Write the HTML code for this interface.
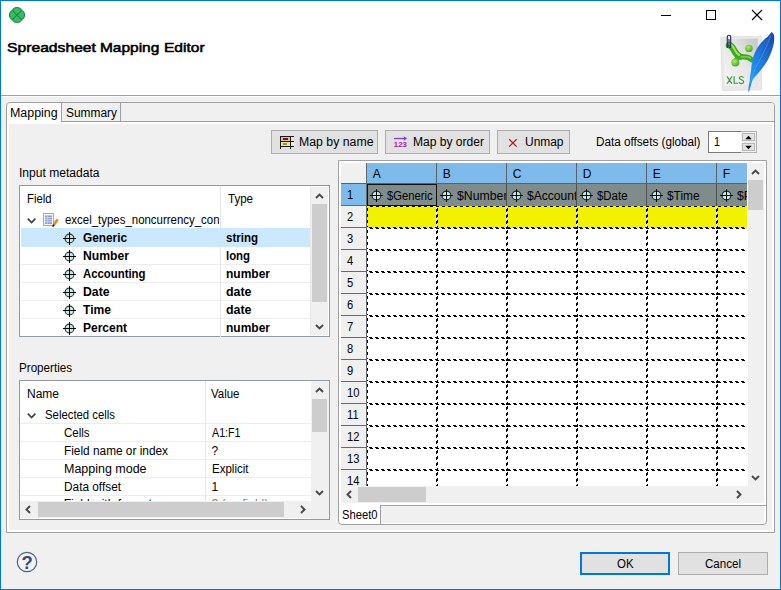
<!DOCTYPE html>
<html><head><meta charset="utf-8"><title>Spreadsheet Mapping Editor</title>
<style>
html,body{margin:0;padding:0}
body{width:781px;height:590px;overflow:hidden;background:#f0f0f0;position:relative;font-family:"Liberation Sans",sans-serif;font-size:12px}
.a{position:absolute;display:block}
.t{position:absolute;white-space:nowrap;display:block}
</style></head><body>
<div class="a" style="left:0px;top:0px;width:781px;height:590px;background:#f0f0f0;"></div>
<div class="a" style="left:1px;top:1px;width:779px;height:94px;background:#fff;"></div>
<div class="a" style="left:1px;top:95px;width:779px;height:1px;background:#a0a0a0;"></div>
<div class="a" style="left:1px;top:96px;width:779px;height:1px;background:#fbfbfb;"></div>
<div class="a" style="left:0px;top:0px;width:781px;height:1px;background:#0078d7;"></div>
<div class="a" style="left:0px;top:0px;width:1px;height:590px;background:#0078d7;"></div>
<div class="a" style="left:780px;top:0px;width:1px;height:590px;background:#0078d7;"></div>
<div class="a" style="left:0px;top:589px;width:781px;height:1px;background:#0078d7;"></div>
<svg class="a" style="left:8px;top:6px;" width="18" height="18" viewBox="0 0 18 18"><g fill="#3cb868" stroke="#17903e" stroke-width="1.4"><ellipse cx="9" cy="5.5" rx="4.6" ry="3.9"/><ellipse cx="9" cy="12.5" rx="4.6" ry="3.9"/><ellipse cx="5.5" cy="9" rx="3.9" ry="4.6"/><ellipse cx="12.5" cy="9" rx="3.9" ry="4.6"/></g><g fill="#3cb868"><ellipse cx="9" cy="5.5" rx="4.0" ry="3.3"/><ellipse cx="9" cy="12.5" rx="4.0" ry="3.3"/><ellipse cx="5.5" cy="9" rx="3.3" ry="4.0"/><ellipse cx="12.5" cy="9" rx="3.3" ry="4.0"/><rect x="4.5" y="4.5" width="9" height="9"/></g><path d="M4.2 4.2L13.8 13.8M13.8 4.2L4.200 13.800" stroke="#17903e" stroke-width="1.200" fill="none"/></svg>
<div class="a" style="left:661px;top:15px;width:10px;height:1px;background:#000;"></div>
<div class="a" style="left:706px;top:10px;width:10px;height:10px;border:1px solid #000;box-sizing:border-box;"></div>
<svg class="a" style="left:751px;top:9px;" width="12" height="12" viewBox="0 0 12 12"><path d="M1 1L11 11M11 1L1 11" stroke="#000" stroke-width="1.1" fill="none"/></svg>
<span class="t" style="left:7.4px;top:40.00px;font-size:13.4px;line-height:16px;color:#000;transform:scaleX(1.1713);transform-origin:0 0;-webkit-text-stroke:0.55px #000;">Spreadsheet</span>
<span class="t" style="left:100.4px;top:40.00px;font-size:13.4px;line-height:16px;color:#000;transform:scaleX(1.1538);transform-origin:0 0;-webkit-text-stroke:0.55px #000;">Mapping</span>
<span class="t" style="left:164.4px;top:40.00px;font-size:13.4px;line-height:16px;color:#000;transform:scaleX(1.1599);transform-origin:0 0;-webkit-text-stroke:0.55px #000;">Editor</span>
<svg class="a" style="left:711px;top:24px;" width="70" height="76" viewBox="0 0 70 76">
<defs>
<linearGradient id="pg" x1="0" y1="1" x2="1" y2="0"><stop offset="0" stop-color="#f6f6f6"/><stop offset="0.55" stop-color="#e6e6e6"/><stop offset="1" stop-color="#c4c4c4"/></linearGradient>
<linearGradient id="fg" x1="1" y1="0" x2="0" y2="1"><stop offset="0" stop-color="#1c46a4"/><stop offset="0.45" stop-color="#1e72d8"/><stop offset="0.8" stop-color="#1f9af4"/><stop offset="1" stop-color="#1a86f0"/></linearGradient>
<radialGradient id="gb" cx="0.4" cy="0.35" r="0.7"><stop offset="0" stop-color="#b4ee50"/><stop offset="1" stop-color="#3aa428"/></radialGradient>
</defs>
<path d="M9.7 13L50.3 12.2L50.6 65.7L11.6 66.5z" fill="#e9e9e9" stroke="#dcdcdc" stroke-width="0.8"/>
<path d="M12.2 15.5L46.6 14.5L46.8 60.6L13.6 61.9z" fill="url(#pg)"/>
<path d="M18 21C23.500 22.500 22.500 30 29 32.500" stroke="#3fa824" stroke-width="6.600" fill="none" stroke-linecap="round"/>
<path d="M27 31.500C31.500 34.500 36.500 30.500 40.600 35.800" stroke="#3fa824" stroke-width="5.200" fill="none" stroke-linecap="round"/>
<path d="M29 32.500C26 33 25 36 24.500 38.500" stroke="#3fa824" stroke-width="4.800" fill="none" stroke-linecap="round"/>
<path d="M17.500 19.500C23.500 20.500 23 28.500 28 31" stroke="#a6e654" stroke-width="2" fill="none" stroke-linecap="round"/>
<path d="M30 32.800C34 33.600 37 31.500 39.500 34" stroke="#8cd840" stroke-width="1.200" fill="none" stroke-linecap="round"/>
<circle cx="38" cy="24.4" r="3.7" fill="url(#gb)"/>
<circle cx="24.400" cy="38.600" r="4" fill="url(#gb)"/>
<path d="M16 52.400L21 59.700M21 52.400L16 59.700M23.100 52.300V59.200H27M32.500 53.900C31.800 52.200 28.500 51.900 28.400 54C28.300 56.100 32.900 55.600 32.700 58C32.500 60.200 28.700 60.100 27.900 58.100" stroke="#379a37" stroke-width="1.150" fill="none"/>
<path d="M16.300 24v-11c0-2.400 3.400-2.400 3.400 0v9.500c0 1.400-1.700 1.400-1.700 0v-7.500" fill="none" stroke="#1e2a68" stroke-width="1.100"/>
<path d="M60.6 8c2.200 1.600 3 4 2.600 6.200c.2 3-.4 6-1.300 9c-1 3.600-2.300 7-3.900 10.300c-1.700 3.600-4 7-6.400 10.300c-2 2.800-4.400 5.400-6.500 7.800c-1.500 1.800-3 3.400-3.800 5.100l-3.300 11l-.8-.2c.2-3.400.6-7 1.500-10.400c.2-3.500.6-7 1.300-10.300c.4-3.500.6-7 1.300-10.300c.8-3.700 2-7.200 3.800-10.300c1.700-3.300 3.800-6.400 6.500-9c1.500-1.800 3.200-3.400 5.100-4.500c1.200-1.500 2.500-2.700 3.900-4.700z" fill="url(#fg)"/>
<path d="M59.500 12c-3 9-8 19-13.500 29c-3 6-5.500 12-7 19" stroke="#6cc0ff" stroke-width="0.700" fill="none" opacity="0.550"/>
<path d="M56 16c-4 5-7 11-9 17M60 22c-3 6-7 12-11 17M57 32c-3 4-6 8-9 11" stroke="#5ab0ff" stroke-width="0.500" fill="none" opacity="0.350"/>
</svg>
<div class="a" style="left:6px;top:102px;width:769px;height:431px;background:#fff;border:1px solid #a0a0a0;box-sizing:border-box;border-radius:4px 4px 0 0;"></div>
<div class="a" style="left:9px;top:124px;width:763px;height:406px;background:#f0f0f0;"></div>
<div class="a" style="left:62px;top:103px;width:712px;height:18px;background:#f0f0f0;border-radius:0 3px 0 0;"></div>
<div class="a" style="left:62px;top:121px;width:712px;height:1px;background:#a0a0a0;"></div>
<div class="a" style="left:61px;top:103px;width:1px;height:19px;background:#a0a0a0;"></div>
<div class="a" style="left:120px;top:103px;width:1px;height:18px;background:#a0a0a0;"></div>
<span class="t" style="left:9.7px;top:105.00px;font-size:12px;line-height:16px;color:#000;transform:scaleX(1.0363);transform-origin:0 0;">Mapping</span>
<span class="t" style="left:66.0px;top:105.00px;font-size:12px;line-height:16px;color:#000;transform:scaleX(0.9934);transform-origin:0 0;">Summary</span>
<div class="a" style="left:271px;top:130px;width:107px;height:24px;background:#e1e1e1;border:1px solid #adadad;box-sizing:border-box;"></div>
<div class="a" style="left:385px;top:130px;width:105px;height:24px;background:#e1e1e1;border:1px solid #adadad;box-sizing:border-box;"></div>
<div class="a" style="left:497px;top:130px;width:73px;height:24px;background:#e1e1e1;border:1px solid #adadad;box-sizing:border-box;"></div>
<svg class="a" style="left:280px;top:136px;shape-rendering:crispEdges;" width="14" height="13" viewBox="0 0 14 13"><rect x="1" y="1" width="9" height="4" fill="#f0b4a4"/><rect x="11" y="1" width="3" height="4" fill="#f8dcd4"/>
<rect x="1" y="6" width="9" height="4" fill="#e6e88e"/><rect x="11" y="6" width="3" height="4" fill="#f2f2c4"/>
<rect x="3" y="2" width="5" height="2" fill="#2a1414" opacity="0.85"/><rect x="3" y="7" width="4" height="2" fill="#5a5a20" opacity="0.6"/>
<path d="M0.5 0V13M10.5 0V13M0 0.5H14M0 5.5H14M0 10.5H14" stroke="#1a1a1a" stroke-width="1" fill="none"/></svg>
<span class="t" style="left:299.2px;top:134.00px;font-size:12px;line-height:16px;color:#000;transform:scaleX(1.0248);transform-origin:0 0;">Map by name</span>
<svg class="a" style="left:393px;top:134px;" width="16" height="16" viewBox="0 0 16 16"><path d="M1 4.500h12.500" stroke="#7a3ad8" stroke-width="1.200" fill="none"/><path d="M10.800 2.200l3 2.300l-3 2.300z" fill="#7a3ad8"/>
<text x="0.8" y="13.4" font-family="Liberation Sans, sans-serif" font-size="7.6" font-weight="bold" fill="#a41ea4" textLength="13" lengthAdjust="spacingAndGlyphs">123</text></svg>
<span class="t" style="left:413.2px;top:134.00px;font-size:12px;line-height:16px;color:#000;transform:scaleX(1.0043);transform-origin:0 0;">Map by order</span>
<svg class="a" style="left:508px;top:138px;" width="10" height="10" viewBox="0 0 10 10"><path d="M1.2 1.2L8.6 8.6M8.600 1.200L1.200 8.600" stroke="#a82828" stroke-width="1.300" fill="none"/></svg>
<span class="t" style="left:525.2px;top:134.00px;font-size:12px;line-height:16px;color:#000;transform:scaleX(0.9953);transform-origin:0 0;">Unmap</span>
<span class="t" style="left:596.4px;top:134.00px;font-size:12px;line-height:16px;color:#000;transform:scaleX(0.9752);transform-origin:0 0;">Data offsets (global)</span>
<div class="a" style="left:708px;top:131px;width:49px;height:22px;background:#f0f0f0;border:1px solid #b2b2b2;box-sizing:border-box;"></div>
<div class="a" style="left:708px;top:131px;width:33px;height:22px;background:#fff;border:1px solid #7a7a7a;box-sizing:border-box;border-right:none;"></div>
<div class="a" style="left:742px;top:133px;width:13px;height:8px;background:#e3e3e3;border:1px solid #b8b8b8;box-sizing:border-box;"></div>
<div class="a" style="left:742px;top:143px;width:13px;height:8px;background:#e3e3e3;border:1px solid #b8b8b8;box-sizing:border-box;"></div>
<svg class="a" style="left:745px;top:135px;" width="7" height="5" viewBox="0 0 7 5"><path d="M0.3 4.2L3.5 0.8L6.7 4.2z" fill="#000"/></svg>
<svg class="a" style="left:745px;top:145px;" width="7" height="5" viewBox="0 0 7 5"><path d="M0.3 0.8L3.500 4.200L6.700 0.800z" fill="#000"/></svg>
<span class="t" style="left:714.2px;top:134.00px;font-size:12px;line-height:16px;color:#000;transform:scaleX(0.8991);transform-origin:0 0;">1</span>
<span class="t" style="left:18.7px;top:165.00px;font-size:12px;line-height:16px;color:#000;transform:scaleX(1.0056);transform-origin:0 0;">Input metadata</span>
<div class="a" style="left:19px;top:185px;width:311px;height:152px;background:#fff;border:1px solid #9498a2;box-sizing:border-box;"></div>
<div class="a" style="left:220px;top:186px;width:1px;height:150px;background:#e5e5e5;"></div>
<div class="a" style="left:310px;top:186px;width:1px;height:149px;background:#e8e8e8;"></div>
<span class="t" style="left:26.7px;top:191.00px;font-size:12px;line-height:16px;color:#000;transform:scaleX(0.9420);transform-origin:0 0;">Field</span>
<span class="t" style="left:227.5px;top:191.00px;font-size:12px;line-height:16px;color:#000;transform:scaleX(0.9610);transform-origin:0 0;">Type</span>
<div class="a" style="left:21px;top:228px;width:289px;height:19px;background:#cce8ff;"></div>
<div class="a" style="left:21px;top:264px;width:289px;height:1px;background:#ededed;"></div>
<div class="a" style="left:21px;top:282px;width:289px;height:1px;background:#ededed;"></div>
<div class="a" style="left:21px;top:300px;width:289px;height:1px;background:#ededed;"></div>
<div class="a" style="left:21px;top:318px;width:289px;height:1px;background:#ededed;"></div>
<div class="a" style="left:220px;top:229px;width:1px;height:18px;background:#cce8ff;"></div>
<div class="a" style="left:220px;top:247px;width:1px;height:18px;background:#e5e5e5;"></div>
<div class="a" style="left:220px;top:265px;width:1px;height:18px;background:#e5e5e5;"></div>
<div class="a" style="left:220px;top:283px;width:1px;height:18px;background:#e5e5e5;"></div>
<div class="a" style="left:220px;top:301px;width:1px;height:18px;background:#e5e5e5;"></div>
<div class="a" style="left:220px;top:319px;width:1px;height:18px;background:#e5e5e5;"></div>
<svg class="a" style="left:27px;top:217px;" width="10" height="8" viewBox="0 0 10 8"><path d="M0.8 1.6L4.6 5.6L8.4 1.6" stroke="#404040" stroke-width="1.6" fill="none"/></svg>
<svg class="a" style="left:42px;top:212px;" width="18" height="16" viewBox="0 0 18 16"><rect x="1.5" y="1.5" width="10" height="12" fill="#f6f5ee" stroke="#b9ab7c"/>
<rect x="3" y="3.5" width="7" height="8.5" fill="#8d9dd6"/>
<path d="M3 5.7h7M3 7.8h7M3 9.900h7" stroke="#e4e9fb" stroke-width="0.800"/><path d="M5.300 3.500v8.500" stroke="#c9d2f4" stroke-width="0.800"/>
<path d="M15.600 7.200L11.600 13.200" stroke="#e08a2e" stroke-width="2.600"/><path d="M11.900 12.700L10.700 14.600" stroke="#1a1a1a" stroke-width="1.600"/></svg>
<div class="a" style="left:64.6px;top:212.00px;width:154.4px;height:16px;overflow:hidden"><span class="t" style="left:0;top:0;font-size:12px;line-height:16px;color:#000;transform:scaleX(0.9532);transform-origin:0 0;">excel_types_noncurrency_con</span></div>
<svg class="a" style="left:63px;top:232px;" width="13" height="13" viewBox="0 0 13 13"><circle cx="6.5" cy="6.5" r="4.4" fill="#c4ece6" stroke="#2c3636" stroke-width="1.1"/><path d="M6.5 0V13M0 6.5H13" stroke="#000" stroke-width="1" fill="none"/></svg>
<span class="t" style="left:82.7px;top:230.00px;font-size:12px;line-height:16px;color:#000;font-weight:bold;transform:scaleX(0.9846);transform-origin:0 0;">Generic</span>
<span class="t" style="left:226.4px;top:230.00px;font-size:12px;line-height:16px;color:#000;font-weight:bold;transform:scaleX(0.9600);transform-origin:0 0;">string</span>
<svg class="a" style="left:63px;top:250px;" width="13" height="13" viewBox="0 0 13 13"><circle cx="6.5" cy="6.5" r="4.4" fill="#c4ece6" stroke="#2c3636" stroke-width="1.1"/><path d="M6.5 0V13M0 6.5H13" stroke="#000" stroke-width="1" fill="none"/></svg>
<span class="t" style="left:82.7px;top:248.00px;font-size:12px;line-height:16px;color:#000;font-weight:bold;transform:scaleX(1.0146);transform-origin:0 0;">Number</span>
<span class="t" style="left:226.4px;top:248.00px;font-size:12px;line-height:16px;color:#000;font-weight:bold;transform:scaleX(0.9478);transform-origin:0 0;">long</span>
<svg class="a" style="left:63px;top:268px;" width="13" height="13" viewBox="0 0 13 13"><circle cx="6.5" cy="6.5" r="4.4" fill="#c4ece6" stroke="#2c3636" stroke-width="1.1"/><path d="M6.5 0V13M0 6.5H13" stroke="#000" stroke-width="1" fill="none"/></svg>
<span class="t" style="left:82.7px;top:266.00px;font-size:12px;line-height:16px;color:#000;font-weight:bold;transform:scaleX(0.9471);transform-origin:0 0;">Accounting</span>
<span class="t" style="left:226.4px;top:266.00px;font-size:12px;line-height:16px;color:#000;font-weight:bold;transform:scaleX(0.9999);transform-origin:0 0;">number</span>
<svg class="a" style="left:63px;top:286px;" width="13" height="13" viewBox="0 0 13 13"><circle cx="6.5" cy="6.5" r="4.4" fill="#c4ece6" stroke="#2c3636" stroke-width="1.1"/><path d="M6.5 0V13M0 6.5H13" stroke="#000" stroke-width="1" fill="none"/></svg>
<span class="t" style="left:82.7px;top:284.00px;font-size:12px;line-height:16px;color:#000;font-weight:bold;transform:scaleX(1.0189);transform-origin:0 0;">Date</span>
<span class="t" style="left:226.4px;top:284.00px;font-size:12px;line-height:16px;color:#000;font-weight:bold;transform:scaleX(1.0336);transform-origin:0 0;">date</span>
<svg class="a" style="left:63px;top:304px;" width="13" height="13" viewBox="0 0 13 13"><circle cx="6.5" cy="6.5" r="4.4" fill="#c4ece6" stroke="#2c3636" stroke-width="1.1"/><path d="M6.5 0V13M0 6.5H13" stroke="#000" stroke-width="1" fill="none"/></svg>
<span class="t" style="left:82.7px;top:302.00px;font-size:12px;line-height:16px;color:#000;font-weight:bold;transform:scaleX(1.0076);transform-origin:0 0;">Time</span>
<span class="t" style="left:226.4px;top:302.00px;font-size:12px;line-height:16px;color:#000;font-weight:bold;transform:scaleX(1.0336);transform-origin:0 0;">date</span>
<svg class="a" style="left:63px;top:322px;" width="13" height="13" viewBox="0 0 13 13"><circle cx="6.5" cy="6.5" r="4.4" fill="#c4ece6" stroke="#2c3636" stroke-width="1.1"/><path d="M6.5 0V13M0 6.5H13" stroke="#000" stroke-width="1" fill="none"/></svg>
<span class="t" style="left:82.7px;top:320.00px;font-size:12px;line-height:16px;color:#000;font-weight:bold;transform:scaleX(0.9996);transform-origin:0 0;">Percent</span>
<span class="t" style="left:226.4px;top:320.00px;font-size:12px;line-height:16px;color:#000;font-weight:bold;transform:scaleX(0.9999);transform-origin:0 0;">number</span>
<div class="a" style="left:311px;top:187px;width:17px;height:148px;background:#f0f0f0;"></div>
<div class="a" style="left:312px;top:204px;width:15px;height:98px;background:#cdcdcd;"></div>
<svg class="a" style="left:315px;top:193px;" width="9" height="6" viewBox="0 0 9 6"><path d="M1 5L4.5 1.5L8 5" stroke="#484848" stroke-width="1.9" fill="none"/></svg>
<svg class="a" style="left:315px;top:324px;" width="9" height="6" viewBox="0 0 9 6"><path d="M1 1L4.5 4.5L8 1" stroke="#484848" stroke-width="1.9" fill="none"/></svg>
<span class="t" style="left:18.7px;top:360.00px;font-size:12px;line-height:16px;color:#000;transform:scaleX(0.9691);transform-origin:0 0;">Properties</span>
<div class="a" style="left:19px;top:380px;width:311px;height:140px;background:#fff;border:1px solid #9498a2;box-sizing:border-box;"></div>
<div class="a" style="left:205px;top:381px;width:1px;height:120px;background:#e5e5e5;"></div>
<span class="t" style="left:26.7px;top:386.00px;font-size:12px;line-height:16px;color:#000;transform:scaleX(0.9997);transform-origin:0 0;">Name</span>
<span class="t" style="left:211.2px;top:386.00px;font-size:12px;line-height:16px;color:#000;transform:scaleX(0.9564);transform-origin:0 0;">Value</span>
<div class="a" style="left:20px;top:423px;width:291px;height:1px;background:#ededed;"></div>
<div class="a" style="left:20px;top:441px;width:291px;height:1px;background:#ededed;"></div>
<div class="a" style="left:20px;top:459px;width:291px;height:1px;background:#ededed;"></div>
<div class="a" style="left:20px;top:477px;width:291px;height:1px;background:#ededed;"></div>
<div class="a" style="left:20px;top:495px;width:291px;height:1px;background:#ededed;"></div>
<svg class="a" style="left:27px;top:412px;" width="10" height="8" viewBox="0 0 10 8"><path d="M0.8 1.6L4.6 5.6L8.4 1.6" stroke="#404040" stroke-width="1.6" fill="none"/></svg>
<span class="t" style="left:44.7px;top:407.00px;font-size:12px;line-height:16px;color:#000;transform:scaleX(0.9455);transform-origin:0 0;">Selected cells</span>
<span class="t" style="left:63.7px;top:425.00px;font-size:12px;line-height:16px;color:#000;transform:scaleX(0.9561);transform-origin:0 0;">Cells</span>
<span class="t" style="left:211.6px;top:425.00px;font-size:12px;line-height:16px;color:#000;transform:scaleX(0.8902);transform-origin:0 0;">A1:F1</span>
<span class="t" style="left:63.7px;top:443.00px;font-size:12px;line-height:16px;color:#000;transform:scaleX(0.9869);transform-origin:0 0;">Field name or index</span>
<span class="t" style="left:211.6px;top:443.00px;font-size:12px;line-height:16px;color:#000;">?</span>
<span class="t" style="left:63.7px;top:461.00px;font-size:12px;line-height:16px;color:#000;transform:scaleX(1.0394);transform-origin:0 0;">Mapping mode</span>
<span class="t" style="left:211.6px;top:461.00px;font-size:12px;line-height:16px;color:#000;transform:scaleX(0.9603);transform-origin:0 0;">Explicit</span>
<span class="t" style="left:63.7px;top:479.00px;font-size:12px;line-height:16px;color:#000;transform:scaleX(0.9860);transform-origin:0 0;">Data offset</span>
<span class="t" style="left:211.6px;top:479.00px;font-size:12px;line-height:16px;color:#000;">1</span>
<div class="a" style="left:20px;top:496px;width:291px;height:5px;overflow:hidden">
<span class="t" style="left:43.7px;top:0px;font-size:12px;line-height:16px">Field with format</span>
<span class="t" style="left:191.600px;top:0px;font-size:12px;line-height:16px;color:#808080">? (no field)</span>
</div>
<div class="a" style="left:311px;top:381px;width:17px;height:120px;background:#f0f0f0;"></div>
<div class="a" style="left:312px;top:399px;width:15px;height:33px;background:#cdcdcd;"></div>
<svg class="a" style="left:315px;top:387px;" width="9" height="6" viewBox="0 0 9 6"><path d="M1 5L4.5 1.5L8 5" stroke="#484848" stroke-width="1.9" fill="none"/></svg>
<svg class="a" style="left:315px;top:490px;" width="9" height="6" viewBox="0 0 9 6"><path d="M1 1L4.5 4.5L8 1" stroke="#484848" stroke-width="1.9" fill="none"/></svg>
<div class="a" style="left:328px;top:381px;width:1px;height:138px;background:#f0f0f0;"></div>
<div class="a" style="left:20px;top:501px;width:291px;height:17px;background:#f0f0f0;"></div>
<div class="a" style="left:38px;top:502px;width:246px;height:15px;background:#cdcdcd;"></div>
<svg class="a" style="left:25px;top:505px;" width="6" height="9" viewBox="0 0 6 9"><path d="M5 1L1.5 4.5L5 8" stroke="#484848" stroke-width="1.9" fill="none"/></svg>
<svg class="a" style="left:300px;top:505px;" width="6" height="9" viewBox="0 0 6 9"><path d="M1 1L4.5 4.5L1 8" stroke="#484848" stroke-width="1.9" fill="none"/></svg>
<div class="a" style="left:311px;top:501px;width:18px;height:18px;background:#f0f0f0;"></div>
<div class="a" style="left:338px;top:160px;width:429px;height:365px;background:#fff;border:1px solid #a0a0a0;box-sizing:border-box;border-radius:0 0 4px 4px;"></div>
<div class="a" style="left:341px;top:163px;width:406px;height:323px;background:#fff;"></div>
<div class="a" style="left:341px;top:163px;width:25px;height:20px;background:#f0f0f0;"></div>
<div class="a" style="left:367px;top:163px;width:380px;height:20px;background:#7ebbea;"></div>
<div class="a" style="left:366px;top:163px;width:1px;height:21px;background:#5a6268;"></div>
<div class="a" style="left:367px;top:163px;width:69px;height:20px;overflow:hidden"></div>
<span class="t" style="left:372.7px;top:166.00px;font-size:12px;line-height:16px;color:#000;">A</span>
<div class="a" style="left:436px;top:163px;width:1px;height:21px;background:#5a6268;"></div>
<div class="a" style="left:437px;top:163px;width:69px;height:20px;overflow:hidden"></div>
<span class="t" style="left:442.7px;top:166.00px;font-size:12px;line-height:16px;color:#000;">B</span>
<div class="a" style="left:506px;top:163px;width:1px;height:21px;background:#5a6268;"></div>
<div class="a" style="left:507px;top:163px;width:69px;height:20px;overflow:hidden"></div>
<span class="t" style="left:512.7px;top:166.00px;font-size:12px;line-height:16px;color:#000;">C</span>
<div class="a" style="left:576px;top:163px;width:1px;height:21px;background:#5a6268;"></div>
<div class="a" style="left:577px;top:163px;width:69px;height:20px;overflow:hidden"></div>
<span class="t" style="left:582.7px;top:166.00px;font-size:12px;line-height:16px;color:#000;">D</span>
<div class="a" style="left:646px;top:163px;width:1px;height:21px;background:#5a6268;"></div>
<div class="a" style="left:647px;top:163px;width:69px;height:20px;overflow:hidden"></div>
<span class="t" style="left:652.7px;top:166.00px;font-size:12px;line-height:16px;color:#000;">E</span>
<div class="a" style="left:716px;top:163px;width:1px;height:21px;background:#5a6268;"></div>
<div class="a" style="left:717px;top:163px;width:30px;height:20px;overflow:hidden"></div>
<span class="t" style="left:722.7px;top:166.00px;font-size:12px;line-height:16px;color:#000;">F</span>
<div class="a" style="left:341px;top:183px;width:406px;height:1px;background:#5a6268;"></div>
<div class="a" style="left:341px;top:184px;width:25px;height:22px;background:#7ebbea;"></div>
<div class="a" style="left:341px;top:205px;width:25px;height:1px;background:#6a6a6a;"></div>
<div class="a" style="left:341px;top:206px;width:25px;height:22px;background:#f0f0f0;"></div>
<div class="a" style="left:341px;top:227px;width:25px;height:1px;background:#6a6a6a;"></div>
<div class="a" style="left:341px;top:228px;width:25px;height:22px;background:#f0f0f0;"></div>
<div class="a" style="left:341px;top:249px;width:25px;height:1px;background:#6a6a6a;"></div>
<div class="a" style="left:341px;top:250px;width:25px;height:22px;background:#f0f0f0;"></div>
<div class="a" style="left:341px;top:271px;width:25px;height:1px;background:#6a6a6a;"></div>
<div class="a" style="left:341px;top:272px;width:25px;height:22px;background:#f0f0f0;"></div>
<div class="a" style="left:341px;top:293px;width:25px;height:1px;background:#6a6a6a;"></div>
<div class="a" style="left:341px;top:294px;width:25px;height:22px;background:#f0f0f0;"></div>
<div class="a" style="left:341px;top:315px;width:25px;height:1px;background:#6a6a6a;"></div>
<div class="a" style="left:341px;top:316px;width:25px;height:22px;background:#f0f0f0;"></div>
<div class="a" style="left:341px;top:337px;width:25px;height:1px;background:#6a6a6a;"></div>
<div class="a" style="left:341px;top:338px;width:25px;height:22px;background:#f0f0f0;"></div>
<div class="a" style="left:341px;top:359px;width:25px;height:1px;background:#6a6a6a;"></div>
<div class="a" style="left:341px;top:360px;width:25px;height:22px;background:#f0f0f0;"></div>
<div class="a" style="left:341px;top:381px;width:25px;height:1px;background:#6a6a6a;"></div>
<div class="a" style="left:341px;top:382px;width:25px;height:22px;background:#f0f0f0;"></div>
<div class="a" style="left:341px;top:403px;width:25px;height:1px;background:#6a6a6a;"></div>
<div class="a" style="left:341px;top:404px;width:25px;height:22px;background:#f0f0f0;"></div>
<div class="a" style="left:341px;top:425px;width:25px;height:1px;background:#6a6a6a;"></div>
<div class="a" style="left:341px;top:426px;width:25px;height:22px;background:#f0f0f0;"></div>
<div class="a" style="left:341px;top:447px;width:25px;height:1px;background:#6a6a6a;"></div>
<div class="a" style="left:341px;top:448px;width:25px;height:22px;background:#f0f0f0;"></div>
<div class="a" style="left:341px;top:469px;width:25px;height:1px;background:#6a6a6a;"></div>
<div class="a" style="left:341px;top:470px;width:25px;height:16px;background:#f0f0f0;"></div>
<div class="a" style="left:341px;top:184px;width:25px;height:22px;overflow:hidden"><span class="t" style="left:6px;top:3px;font-size:12px;line-height:16px;transform:scaleX(0.93);transform-origin:0 0">1</span></div>
<div class="a" style="left:341px;top:206px;width:25px;height:22px;overflow:hidden"><span class="t" style="left:6px;top:3px;font-size:12px;line-height:16px;transform:scaleX(0.93);transform-origin:0 0">2</span></div>
<div class="a" style="left:341px;top:228px;width:25px;height:22px;overflow:hidden"><span class="t" style="left:6px;top:3px;font-size:12px;line-height:16px;transform:scaleX(0.93);transform-origin:0 0">3</span></div>
<div class="a" style="left:341px;top:250px;width:25px;height:22px;overflow:hidden"><span class="t" style="left:6px;top:3px;font-size:12px;line-height:16px;transform:scaleX(0.93);transform-origin:0 0">4</span></div>
<div class="a" style="left:341px;top:272px;width:25px;height:22px;overflow:hidden"><span class="t" style="left:6px;top:3px;font-size:12px;line-height:16px;transform:scaleX(0.93);transform-origin:0 0">5</span></div>
<div class="a" style="left:341px;top:294px;width:25px;height:22px;overflow:hidden"><span class="t" style="left:6px;top:3px;font-size:12px;line-height:16px;transform:scaleX(0.93);transform-origin:0 0">6</span></div>
<div class="a" style="left:341px;top:316px;width:25px;height:22px;overflow:hidden"><span class="t" style="left:6px;top:3px;font-size:12px;line-height:16px;transform:scaleX(0.93);transform-origin:0 0">7</span></div>
<div class="a" style="left:341px;top:338px;width:25px;height:22px;overflow:hidden"><span class="t" style="left:6px;top:3px;font-size:12px;line-height:16px;transform:scaleX(0.93);transform-origin:0 0">8</span></div>
<div class="a" style="left:341px;top:360px;width:25px;height:22px;overflow:hidden"><span class="t" style="left:6px;top:3px;font-size:12px;line-height:16px;transform:scaleX(0.93);transform-origin:0 0">9</span></div>
<div class="a" style="left:341px;top:382px;width:25px;height:22px;overflow:hidden"><span class="t" style="left:6px;top:3px;font-size:12px;line-height:16px;transform:scaleX(0.93);transform-origin:0 0">10</span></div>
<div class="a" style="left:341px;top:404px;width:25px;height:22px;overflow:hidden"><span class="t" style="left:6px;top:3px;font-size:12px;line-height:16px;transform:scaleX(0.93);transform-origin:0 0">11</span></div>
<div class="a" style="left:341px;top:426px;width:25px;height:22px;overflow:hidden"><span class="t" style="left:6px;top:3px;font-size:12px;line-height:16px;transform:scaleX(0.93);transform-origin:0 0">12</span></div>
<div class="a" style="left:341px;top:448px;width:25px;height:22px;overflow:hidden"><span class="t" style="left:6px;top:3px;font-size:12px;line-height:16px;transform:scaleX(0.93);transform-origin:0 0">13</span></div>
<div class="a" style="left:341px;top:470px;width:25px;height:16px;overflow:hidden"><span class="t" style="left:6px;top:3px;font-size:12px;line-height:16px;transform:scaleX(0.93);transform-origin:0 0">14</span></div>
<div class="a" style="left:366px;top:163px;width:1px;height:323px;background:#646a6c;"></div>
<div class="a" style="left:367px;top:184px;width:380px;height:22px;background:#7f8c8b;"></div>
<div class="a" style="left:367px;top:206px;width:380px;height:22px;background:#f2f200;"></div>
<div class="a" style="left:436px;top:207px;width:1px;height:20px;background:#fff;"></div>
<div class="a" style="left:506px;top:207px;width:1px;height:20px;background:#fff;"></div>
<div class="a" style="left:576px;top:207px;width:1px;height:20px;background:#fff;"></div>
<div class="a" style="left:646px;top:207px;width:1px;height:20px;background:#fff;"></div>
<div class="a" style="left:716px;top:207px;width:1px;height:20px;background:#fff;"></div>
<svg class="a" style="left:367px;top:184px;shape-rendering:crispEdges;" width="380" height="302" viewBox="0 0 380 302"><path d="M0 22.5H380" stroke="#000" stroke-width="1" stroke-dasharray="3 3" stroke-dashoffset="-3"/><path d="M0 43.5H380" stroke="#000" stroke-width="1" stroke-dasharray="3 3" stroke-dashoffset="-2"/><path d="M0 44.5H380" stroke="#000" stroke-width="1" stroke-dasharray="3 3" stroke-dashoffset="-3"/><rect x="69" y="43" width="2" height="2" fill="#000"/><rect x="139" y="43" width="2" height="2" fill="#000"/><rect x="209" y="43" width="2" height="2" fill="#000"/><rect x="279" y="43" width="2" height="2" fill="#000"/><rect x="349" y="43" width="2" height="2" fill="#000"/><path d="M0 65.5H380" stroke="#000" stroke-width="1" stroke-dasharray="3 3" stroke-dashoffset="-2"/><path d="M0 66.5H380" stroke="#000" stroke-width="1" stroke-dasharray="3 3" stroke-dashoffset="-3"/><rect x="69" y="65" width="2" height="2" fill="#000"/><rect x="139" y="65" width="2" height="2" fill="#000"/><rect x="209" y="65" width="2" height="2" fill="#000"/><rect x="279" y="65" width="2" height="2" fill="#000"/><rect x="349" y="65" width="2" height="2" fill="#000"/><path d="M0 87.5H380" stroke="#000" stroke-width="1" stroke-dasharray="3 3" stroke-dashoffset="-2"/><path d="M0 88.5H380" stroke="#000" stroke-width="1" stroke-dasharray="3 3" stroke-dashoffset="-3"/><rect x="69" y="87" width="2" height="2" fill="#000"/><rect x="139" y="87" width="2" height="2" fill="#000"/><rect x="209" y="87" width="2" height="2" fill="#000"/><rect x="279" y="87" width="2" height="2" fill="#000"/><rect x="349" y="87" width="2" height="2" fill="#000"/><path d="M0 109.5H380" stroke="#000" stroke-width="1" stroke-dasharray="3 3" stroke-dashoffset="-2"/><path d="M0 110.5H380" stroke="#000" stroke-width="1" stroke-dasharray="3 3" stroke-dashoffset="-3"/><rect x="69" y="109" width="2" height="2" fill="#000"/><rect x="139" y="109" width="2" height="2" fill="#000"/><rect x="209" y="109" width="2" height="2" fill="#000"/><rect x="279" y="109" width="2" height="2" fill="#000"/><rect x="349" y="109" width="2" height="2" fill="#000"/><path d="M0 131.5H380" stroke="#000" stroke-width="1" stroke-dasharray="3 3" stroke-dashoffset="-2"/><path d="M0 132.5H380" stroke="#000" stroke-width="1" stroke-dasharray="3 3" stroke-dashoffset="-3"/><rect x="69" y="131" width="2" height="2" fill="#000"/><rect x="139" y="131" width="2" height="2" fill="#000"/><rect x="209" y="131" width="2" height="2" fill="#000"/><rect x="279" y="131" width="2" height="2" fill="#000"/><rect x="349" y="131" width="2" height="2" fill="#000"/><path d="M0 153.5H380" stroke="#000" stroke-width="1" stroke-dasharray="3 3" stroke-dashoffset="-2"/><path d="M0 154.5H380" stroke="#000" stroke-width="1" stroke-dasharray="3 3" stroke-dashoffset="-3"/><rect x="69" y="153" width="2" height="2" fill="#000"/><rect x="139" y="153" width="2" height="2" fill="#000"/><rect x="209" y="153" width="2" height="2" fill="#000"/><rect x="279" y="153" width="2" height="2" fill="#000"/><rect x="349" y="153" width="2" height="2" fill="#000"/><path d="M0 175.5H380" stroke="#000" stroke-width="1" stroke-dasharray="3 3" stroke-dashoffset="-2"/><path d="M0 176.5H380" stroke="#000" stroke-width="1" stroke-dasharray="3 3" stroke-dashoffset="-3"/><rect x="69" y="175" width="2" height="2" fill="#000"/><rect x="139" y="175" width="2" height="2" fill="#000"/><rect x="209" y="175" width="2" height="2" fill="#000"/><rect x="279" y="175" width="2" height="2" fill="#000"/><rect x="349" y="175" width="2" height="2" fill="#000"/><path d="M0 197.5H380" stroke="#000" stroke-width="1" stroke-dasharray="3 3" stroke-dashoffset="-2"/><path d="M0 198.5H380" stroke="#000" stroke-width="1" stroke-dasharray="3 3" stroke-dashoffset="-3"/><rect x="69" y="197" width="2" height="2" fill="#000"/><rect x="139" y="197" width="2" height="2" fill="#000"/><rect x="209" y="197" width="2" height="2" fill="#000"/><rect x="279" y="197" width="2" height="2" fill="#000"/><rect x="349" y="197" width="2" height="2" fill="#000"/><path d="M0 219.5H380" stroke="#000" stroke-width="1" stroke-dasharray="3 3" stroke-dashoffset="-2"/><path d="M0 220.5H380" stroke="#000" stroke-width="1" stroke-dasharray="3 3" stroke-dashoffset="-3"/><rect x="69" y="219" width="2" height="2" fill="#000"/><rect x="139" y="219" width="2" height="2" fill="#000"/><rect x="209" y="219" width="2" height="2" fill="#000"/><rect x="279" y="219" width="2" height="2" fill="#000"/><rect x="349" y="219" width="2" height="2" fill="#000"/><path d="M0 241.5H380" stroke="#000" stroke-width="1" stroke-dasharray="3 3" stroke-dashoffset="-2"/><path d="M0 242.5H380" stroke="#000" stroke-width="1" stroke-dasharray="3 3" stroke-dashoffset="-3"/><rect x="69" y="241" width="2" height="2" fill="#000"/><rect x="139" y="241" width="2" height="2" fill="#000"/><rect x="209" y="241" width="2" height="2" fill="#000"/><rect x="279" y="241" width="2" height="2" fill="#000"/><rect x="349" y="241" width="2" height="2" fill="#000"/><path d="M0 263.5H380" stroke="#000" stroke-width="1" stroke-dasharray="3 3" stroke-dashoffset="-2"/><path d="M0 264.5H380" stroke="#000" stroke-width="1" stroke-dasharray="3 3" stroke-dashoffset="-3"/><rect x="69" y="263" width="2" height="2" fill="#000"/><rect x="139" y="263" width="2" height="2" fill="#000"/><rect x="209" y="263" width="2" height="2" fill="#000"/><rect x="279" y="263" width="2" height="2" fill="#000"/><rect x="349" y="263" width="2" height="2" fill="#000"/><path d="M0 285.5H380" stroke="#000" stroke-width="1" stroke-dasharray="3 3" stroke-dashoffset="-2"/><path d="M0 286.5H380" stroke="#000" stroke-width="1" stroke-dasharray="3 3" stroke-dashoffset="-3"/><rect x="69" y="285" width="2" height="2" fill="#000"/><rect x="139" y="285" width="2" height="2" fill="#000"/><rect x="209" y="285" width="2" height="2" fill="#000"/><rect x="279" y="285" width="2" height="2" fill="#000"/><rect x="349" y="285" width="2" height="2" fill="#000"/><path d="M-0.5 23V43" stroke="#000" stroke-width="1" stroke-dasharray="3 3" stroke-dashoffset="-2"/><path d="M0.5 23V43" stroke="#000" stroke-width="1" stroke-dasharray="3 3" stroke-dashoffset="-1"/><path d="M-0.5 45V65" stroke="#000" stroke-width="1" stroke-dasharray="3 3" stroke-dashoffset="-2"/><path d="M0.5 45V65" stroke="#000" stroke-width="1" stroke-dasharray="3 3" stroke-dashoffset="-1"/><path d="M-0.5 67V87" stroke="#000" stroke-width="1" stroke-dasharray="3 3" stroke-dashoffset="-2"/><path d="M0.5 67V87" stroke="#000" stroke-width="1" stroke-dasharray="3 3" stroke-dashoffset="-1"/><path d="M-0.5 89V109" stroke="#000" stroke-width="1" stroke-dasharray="3 3" stroke-dashoffset="-2"/><path d="M0.5 89V109" stroke="#000" stroke-width="1" stroke-dasharray="3 3" stroke-dashoffset="-1"/><path d="M-0.5 111V131" stroke="#000" stroke-width="1" stroke-dasharray="3 3" stroke-dashoffset="-2"/><path d="M0.5 111V131" stroke="#000" stroke-width="1" stroke-dasharray="3 3" stroke-dashoffset="-1"/><path d="M-0.5 133V153" stroke="#000" stroke-width="1" stroke-dasharray="3 3" stroke-dashoffset="-2"/><path d="M0.5 133V153" stroke="#000" stroke-width="1" stroke-dasharray="3 3" stroke-dashoffset="-1"/><path d="M-0.5 155V175" stroke="#000" stroke-width="1" stroke-dasharray="3 3" stroke-dashoffset="-2"/><path d="M0.5 155V175" stroke="#000" stroke-width="1" stroke-dasharray="3 3" stroke-dashoffset="-1"/><path d="M-0.5 177V197" stroke="#000" stroke-width="1" stroke-dasharray="3 3" stroke-dashoffset="-2"/><path d="M0.5 177V197" stroke="#000" stroke-width="1" stroke-dasharray="3 3" stroke-dashoffset="-1"/><path d="M-0.5 199V219" stroke="#000" stroke-width="1" stroke-dasharray="3 3" stroke-dashoffset="-2"/><path d="M0.5 199V219" stroke="#000" stroke-width="1" stroke-dasharray="3 3" stroke-dashoffset="-1"/><path d="M-0.5 221V241" stroke="#000" stroke-width="1" stroke-dasharray="3 3" stroke-dashoffset="-2"/><path d="M0.5 221V241" stroke="#000" stroke-width="1" stroke-dasharray="3 3" stroke-dashoffset="-1"/><path d="M-0.5 243V263" stroke="#000" stroke-width="1" stroke-dasharray="3 3" stroke-dashoffset="-2"/><path d="M0.5 243V263" stroke="#000" stroke-width="1" stroke-dasharray="3 3" stroke-dashoffset="-1"/><path d="M-0.5 265V285" stroke="#000" stroke-width="1" stroke-dasharray="3 3" stroke-dashoffset="-2"/><path d="M0.5 265V285" stroke="#000" stroke-width="1" stroke-dasharray="3 3" stroke-dashoffset="-1"/><path d="M-0.5 287V302" stroke="#000" stroke-width="1" stroke-dasharray="3 3" stroke-dashoffset="-2"/><path d="M0.5 287V302" stroke="#000" stroke-width="1" stroke-dasharray="3 3" stroke-dashoffset="-1"/><path d="M69.5 23V43" stroke="#000" stroke-width="1" stroke-dasharray="3 3" stroke-dashoffset="-2"/><path d="M70.5 23V43" stroke="#000" stroke-width="1" stroke-dasharray="3 3" stroke-dashoffset="-1"/><path d="M69.5 45V65" stroke="#000" stroke-width="1" stroke-dasharray="3 3" stroke-dashoffset="-2"/><path d="M70.5 45V65" stroke="#000" stroke-width="1" stroke-dasharray="3 3" stroke-dashoffset="-1"/><path d="M69.5 67V87" stroke="#000" stroke-width="1" stroke-dasharray="3 3" stroke-dashoffset="-2"/><path d="M70.5 67V87" stroke="#000" stroke-width="1" stroke-dasharray="3 3" stroke-dashoffset="-1"/><path d="M69.5 89V109" stroke="#000" stroke-width="1" stroke-dasharray="3 3" stroke-dashoffset="-2"/><path d="M70.5 89V109" stroke="#000" stroke-width="1" stroke-dasharray="3 3" stroke-dashoffset="-1"/><path d="M69.5 111V131" stroke="#000" stroke-width="1" stroke-dasharray="3 3" stroke-dashoffset="-2"/><path d="M70.5 111V131" stroke="#000" stroke-width="1" stroke-dasharray="3 3" stroke-dashoffset="-1"/><path d="M69.5 133V153" stroke="#000" stroke-width="1" stroke-dasharray="3 3" stroke-dashoffset="-2"/><path d="M70.5 133V153" stroke="#000" stroke-width="1" stroke-dasharray="3 3" stroke-dashoffset="-1"/><path d="M69.5 155V175" stroke="#000" stroke-width="1" stroke-dasharray="3 3" stroke-dashoffset="-2"/><path d="M70.5 155V175" stroke="#000" stroke-width="1" stroke-dasharray="3 3" stroke-dashoffset="-1"/><path d="M69.5 177V197" stroke="#000" stroke-width="1" stroke-dasharray="3 3" stroke-dashoffset="-2"/><path d="M70.5 177V197" stroke="#000" stroke-width="1" stroke-dasharray="3 3" stroke-dashoffset="-1"/><path d="M69.5 199V219" stroke="#000" stroke-width="1" stroke-dasharray="3 3" stroke-dashoffset="-2"/><path d="M70.5 199V219" stroke="#000" stroke-width="1" stroke-dasharray="3 3" stroke-dashoffset="-1"/><path d="M69.5 221V241" stroke="#000" stroke-width="1" stroke-dasharray="3 3" stroke-dashoffset="-2"/><path d="M70.5 221V241" stroke="#000" stroke-width="1" stroke-dasharray="3 3" stroke-dashoffset="-1"/><path d="M69.5 243V263" stroke="#000" stroke-width="1" stroke-dasharray="3 3" stroke-dashoffset="-2"/><path d="M70.5 243V263" stroke="#000" stroke-width="1" stroke-dasharray="3 3" stroke-dashoffset="-1"/><path d="M69.5 265V285" stroke="#000" stroke-width="1" stroke-dasharray="3 3" stroke-dashoffset="-2"/><path d="M70.5 265V285" stroke="#000" stroke-width="1" stroke-dasharray="3 3" stroke-dashoffset="-1"/><path d="M69.5 287V302" stroke="#000" stroke-width="1" stroke-dasharray="3 3" stroke-dashoffset="-2"/><path d="M70.5 287V302" stroke="#000" stroke-width="1" stroke-dasharray="3 3" stroke-dashoffset="-1"/><path d="M139.5 23V43" stroke="#000" stroke-width="1" stroke-dasharray="3 3" stroke-dashoffset="-2"/><path d="M140.5 23V43" stroke="#000" stroke-width="1" stroke-dasharray="3 3" stroke-dashoffset="-1"/><path d="M139.5 45V65" stroke="#000" stroke-width="1" stroke-dasharray="3 3" stroke-dashoffset="-2"/><path d="M140.5 45V65" stroke="#000" stroke-width="1" stroke-dasharray="3 3" stroke-dashoffset="-1"/><path d="M139.5 67V87" stroke="#000" stroke-width="1" stroke-dasharray="3 3" stroke-dashoffset="-2"/><path d="M140.5 67V87" stroke="#000" stroke-width="1" stroke-dasharray="3 3" stroke-dashoffset="-1"/><path d="M139.5 89V109" stroke="#000" stroke-width="1" stroke-dasharray="3 3" stroke-dashoffset="-2"/><path d="M140.5 89V109" stroke="#000" stroke-width="1" stroke-dasharray="3 3" stroke-dashoffset="-1"/><path d="M139.5 111V131" stroke="#000" stroke-width="1" stroke-dasharray="3 3" stroke-dashoffset="-2"/><path d="M140.5 111V131" stroke="#000" stroke-width="1" stroke-dasharray="3 3" stroke-dashoffset="-1"/><path d="M139.5 133V153" stroke="#000" stroke-width="1" stroke-dasharray="3 3" stroke-dashoffset="-2"/><path d="M140.5 133V153" stroke="#000" stroke-width="1" stroke-dasharray="3 3" stroke-dashoffset="-1"/><path d="M139.5 155V175" stroke="#000" stroke-width="1" stroke-dasharray="3 3" stroke-dashoffset="-2"/><path d="M140.5 155V175" stroke="#000" stroke-width="1" stroke-dasharray="3 3" stroke-dashoffset="-1"/><path d="M139.5 177V197" stroke="#000" stroke-width="1" stroke-dasharray="3 3" stroke-dashoffset="-2"/><path d="M140.5 177V197" stroke="#000" stroke-width="1" stroke-dasharray="3 3" stroke-dashoffset="-1"/><path d="M139.5 199V219" stroke="#000" stroke-width="1" stroke-dasharray="3 3" stroke-dashoffset="-2"/><path d="M140.5 199V219" stroke="#000" stroke-width="1" stroke-dasharray="3 3" stroke-dashoffset="-1"/><path d="M139.5 221V241" stroke="#000" stroke-width="1" stroke-dasharray="3 3" stroke-dashoffset="-2"/><path d="M140.5 221V241" stroke="#000" stroke-width="1" stroke-dasharray="3 3" stroke-dashoffset="-1"/><path d="M139.5 243V263" stroke="#000" stroke-width="1" stroke-dasharray="3 3" stroke-dashoffset="-2"/><path d="M140.5 243V263" stroke="#000" stroke-width="1" stroke-dasharray="3 3" stroke-dashoffset="-1"/><path d="M139.5 265V285" stroke="#000" stroke-width="1" stroke-dasharray="3 3" stroke-dashoffset="-2"/><path d="M140.5 265V285" stroke="#000" stroke-width="1" stroke-dasharray="3 3" stroke-dashoffset="-1"/><path d="M139.5 287V302" stroke="#000" stroke-width="1" stroke-dasharray="3 3" stroke-dashoffset="-2"/><path d="M140.5 287V302" stroke="#000" stroke-width="1" stroke-dasharray="3 3" stroke-dashoffset="-1"/><path d="M209.5 23V43" stroke="#000" stroke-width="1" stroke-dasharray="3 3" stroke-dashoffset="-2"/><path d="M210.5 23V43" stroke="#000" stroke-width="1" stroke-dasharray="3 3" stroke-dashoffset="-1"/><path d="M209.5 45V65" stroke="#000" stroke-width="1" stroke-dasharray="3 3" stroke-dashoffset="-2"/><path d="M210.5 45V65" stroke="#000" stroke-width="1" stroke-dasharray="3 3" stroke-dashoffset="-1"/><path d="M209.5 67V87" stroke="#000" stroke-width="1" stroke-dasharray="3 3" stroke-dashoffset="-2"/><path d="M210.5 67V87" stroke="#000" stroke-width="1" stroke-dasharray="3 3" stroke-dashoffset="-1"/><path d="M209.5 89V109" stroke="#000" stroke-width="1" stroke-dasharray="3 3" stroke-dashoffset="-2"/><path d="M210.5 89V109" stroke="#000" stroke-width="1" stroke-dasharray="3 3" stroke-dashoffset="-1"/><path d="M209.5 111V131" stroke="#000" stroke-width="1" stroke-dasharray="3 3" stroke-dashoffset="-2"/><path d="M210.5 111V131" stroke="#000" stroke-width="1" stroke-dasharray="3 3" stroke-dashoffset="-1"/><path d="M209.5 133V153" stroke="#000" stroke-width="1" stroke-dasharray="3 3" stroke-dashoffset="-2"/><path d="M210.5 133V153" stroke="#000" stroke-width="1" stroke-dasharray="3 3" stroke-dashoffset="-1"/><path d="M209.5 155V175" stroke="#000" stroke-width="1" stroke-dasharray="3 3" stroke-dashoffset="-2"/><path d="M210.5 155V175" stroke="#000" stroke-width="1" stroke-dasharray="3 3" stroke-dashoffset="-1"/><path d="M209.5 177V197" stroke="#000" stroke-width="1" stroke-dasharray="3 3" stroke-dashoffset="-2"/><path d="M210.5 177V197" stroke="#000" stroke-width="1" stroke-dasharray="3 3" stroke-dashoffset="-1"/><path d="M209.5 199V219" stroke="#000" stroke-width="1" stroke-dasharray="3 3" stroke-dashoffset="-2"/><path d="M210.5 199V219" stroke="#000" stroke-width="1" stroke-dasharray="3 3" stroke-dashoffset="-1"/><path d="M209.5 221V241" stroke="#000" stroke-width="1" stroke-dasharray="3 3" stroke-dashoffset="-2"/><path d="M210.5 221V241" stroke="#000" stroke-width="1" stroke-dasharray="3 3" stroke-dashoffset="-1"/><path d="M209.5 243V263" stroke="#000" stroke-width="1" stroke-dasharray="3 3" stroke-dashoffset="-2"/><path d="M210.5 243V263" stroke="#000" stroke-width="1" stroke-dasharray="3 3" stroke-dashoffset="-1"/><path d="M209.5 265V285" stroke="#000" stroke-width="1" stroke-dasharray="3 3" stroke-dashoffset="-2"/><path d="M210.5 265V285" stroke="#000" stroke-width="1" stroke-dasharray="3 3" stroke-dashoffset="-1"/><path d="M209.5 287V302" stroke="#000" stroke-width="1" stroke-dasharray="3 3" stroke-dashoffset="-2"/><path d="M210.5 287V302" stroke="#000" stroke-width="1" stroke-dasharray="3 3" stroke-dashoffset="-1"/><path d="M279.5 23V43" stroke="#000" stroke-width="1" stroke-dasharray="3 3" stroke-dashoffset="-2"/><path d="M280.5 23V43" stroke="#000" stroke-width="1" stroke-dasharray="3 3" stroke-dashoffset="-1"/><path d="M279.5 45V65" stroke="#000" stroke-width="1" stroke-dasharray="3 3" stroke-dashoffset="-2"/><path d="M280.5 45V65" stroke="#000" stroke-width="1" stroke-dasharray="3 3" stroke-dashoffset="-1"/><path d="M279.5 67V87" stroke="#000" stroke-width="1" stroke-dasharray="3 3" stroke-dashoffset="-2"/><path d="M280.5 67V87" stroke="#000" stroke-width="1" stroke-dasharray="3 3" stroke-dashoffset="-1"/><path d="M279.5 89V109" stroke="#000" stroke-width="1" stroke-dasharray="3 3" stroke-dashoffset="-2"/><path d="M280.5 89V109" stroke="#000" stroke-width="1" stroke-dasharray="3 3" stroke-dashoffset="-1"/><path d="M279.5 111V131" stroke="#000" stroke-width="1" stroke-dasharray="3 3" stroke-dashoffset="-2"/><path d="M280.5 111V131" stroke="#000" stroke-width="1" stroke-dasharray="3 3" stroke-dashoffset="-1"/><path d="M279.5 133V153" stroke="#000" stroke-width="1" stroke-dasharray="3 3" stroke-dashoffset="-2"/><path d="M280.5 133V153" stroke="#000" stroke-width="1" stroke-dasharray="3 3" stroke-dashoffset="-1"/><path d="M279.5 155V175" stroke="#000" stroke-width="1" stroke-dasharray="3 3" stroke-dashoffset="-2"/><path d="M280.5 155V175" stroke="#000" stroke-width="1" stroke-dasharray="3 3" stroke-dashoffset="-1"/><path d="M279.5 177V197" stroke="#000" stroke-width="1" stroke-dasharray="3 3" stroke-dashoffset="-2"/><path d="M280.5 177V197" stroke="#000" stroke-width="1" stroke-dasharray="3 3" stroke-dashoffset="-1"/><path d="M279.5 199V219" stroke="#000" stroke-width="1" stroke-dasharray="3 3" stroke-dashoffset="-2"/><path d="M280.5 199V219" stroke="#000" stroke-width="1" stroke-dasharray="3 3" stroke-dashoffset="-1"/><path d="M279.5 221V241" stroke="#000" stroke-width="1" stroke-dasharray="3 3" stroke-dashoffset="-2"/><path d="M280.5 221V241" stroke="#000" stroke-width="1" stroke-dasharray="3 3" stroke-dashoffset="-1"/><path d="M279.5 243V263" stroke="#000" stroke-width="1" stroke-dasharray="3 3" stroke-dashoffset="-2"/><path d="M280.5 243V263" stroke="#000" stroke-width="1" stroke-dasharray="3 3" stroke-dashoffset="-1"/><path d="M279.5 265V285" stroke="#000" stroke-width="1" stroke-dasharray="3 3" stroke-dashoffset="-2"/><path d="M280.5 265V285" stroke="#000" stroke-width="1" stroke-dasharray="3 3" stroke-dashoffset="-1"/><path d="M279.5 287V302" stroke="#000" stroke-width="1" stroke-dasharray="3 3" stroke-dashoffset="-2"/><path d="M280.5 287V302" stroke="#000" stroke-width="1" stroke-dasharray="3 3" stroke-dashoffset="-1"/><path d="M349.5 23V43" stroke="#000" stroke-width="1" stroke-dasharray="3 3" stroke-dashoffset="-2"/><path d="M350.5 23V43" stroke="#000" stroke-width="1" stroke-dasharray="3 3" stroke-dashoffset="-1"/><path d="M349.5 45V65" stroke="#000" stroke-width="1" stroke-dasharray="3 3" stroke-dashoffset="-2"/><path d="M350.5 45V65" stroke="#000" stroke-width="1" stroke-dasharray="3 3" stroke-dashoffset="-1"/><path d="M349.5 67V87" stroke="#000" stroke-width="1" stroke-dasharray="3 3" stroke-dashoffset="-2"/><path d="M350.5 67V87" stroke="#000" stroke-width="1" stroke-dasharray="3 3" stroke-dashoffset="-1"/><path d="M349.5 89V109" stroke="#000" stroke-width="1" stroke-dasharray="3 3" stroke-dashoffset="-2"/><path d="M350.5 89V109" stroke="#000" stroke-width="1" stroke-dasharray="3 3" stroke-dashoffset="-1"/><path d="M349.5 111V131" stroke="#000" stroke-width="1" stroke-dasharray="3 3" stroke-dashoffset="-2"/><path d="M350.5 111V131" stroke="#000" stroke-width="1" stroke-dasharray="3 3" stroke-dashoffset="-1"/><path d="M349.5 133V153" stroke="#000" stroke-width="1" stroke-dasharray="3 3" stroke-dashoffset="-2"/><path d="M350.5 133V153" stroke="#000" stroke-width="1" stroke-dasharray="3 3" stroke-dashoffset="-1"/><path d="M349.5 155V175" stroke="#000" stroke-width="1" stroke-dasharray="3 3" stroke-dashoffset="-2"/><path d="M350.5 155V175" stroke="#000" stroke-width="1" stroke-dasharray="3 3" stroke-dashoffset="-1"/><path d="M349.5 177V197" stroke="#000" stroke-width="1" stroke-dasharray="3 3" stroke-dashoffset="-2"/><path d="M350.5 177V197" stroke="#000" stroke-width="1" stroke-dasharray="3 3" stroke-dashoffset="-1"/><path d="M349.5 199V219" stroke="#000" stroke-width="1" stroke-dasharray="3 3" stroke-dashoffset="-2"/><path d="M350.5 199V219" stroke="#000" stroke-width="1" stroke-dasharray="3 3" stroke-dashoffset="-1"/><path d="M349.5 221V241" stroke="#000" stroke-width="1" stroke-dasharray="3 3" stroke-dashoffset="-2"/><path d="M350.5 221V241" stroke="#000" stroke-width="1" stroke-dasharray="3 3" stroke-dashoffset="-1"/><path d="M349.5 243V263" stroke="#000" stroke-width="1" stroke-dasharray="3 3" stroke-dashoffset="-2"/><path d="M350.5 243V263" stroke="#000" stroke-width="1" stroke-dasharray="3 3" stroke-dashoffset="-1"/><path d="M349.5 265V285" stroke="#000" stroke-width="1" stroke-dasharray="3 3" stroke-dashoffset="-2"/><path d="M350.5 265V285" stroke="#000" stroke-width="1" stroke-dasharray="3 3" stroke-dashoffset="-1"/><path d="M349.5 287V302" stroke="#000" stroke-width="1" stroke-dasharray="3 3" stroke-dashoffset="-2"/><path d="M350.5 287V302" stroke="#000" stroke-width="1" stroke-dasharray="3 3" stroke-dashoffset="-1"/></svg>
<div class="a" style="left:436px;top:184px;width:1px;height:22px;background:#4a5254;"></div>
<div class="a" style="left:506px;top:184px;width:1px;height:22px;background:#4a5254;"></div>
<div class="a" style="left:576px;top:184px;width:1px;height:22px;background:#4a5254;"></div>
<div class="a" style="left:646px;top:184px;width:1px;height:22px;background:#4a5254;"></div>
<div class="a" style="left:716px;top:184px;width:1px;height:22px;background:#4a5254;"></div>
<div class="a" style="left:367px;top:184px;width:70px;height:22px;border:1.5px solid #111;box-sizing:border-box;"></div>
<div class="a" style="left:367px;top:185px;width:69px;height:20px;overflow:hidden">
<svg class="a" style="left:3px;top:4px" width="13" height="13" viewBox="0 0 13 13"><circle cx="6.5" cy="6.5" r="4.4" fill="#b8f0ee" stroke="#1c2626" stroke-width="1.1"/><path d="M6.5 0V13M0 6.500H13" stroke="#000" stroke-width="1" fill="none"/></svg>
<span class="t" style="left:20.3px;top:3px;font-size:12px;line-height:16px;transform:scaleX(0.9345);transform-origin:0 0">$Generic</span>
</div>
<div class="a" style="left:437px;top:185px;width:69px;height:20px;overflow:hidden">
<svg class="a" style="left:3px;top:4px" width="13" height="13" viewBox="0 0 13 13"><circle cx="6.5" cy="6.5" r="4.4" fill="#b8f0ee" stroke="#1c2626" stroke-width="1.1"/><path d="M6.5 0V13M0 6.500H13" stroke="#000" stroke-width="1" fill="none"/></svg>
<span class="t" style="left:20.3px;top:3px;font-size:12px;line-height:16px;transform:scaleX(1.0233);transform-origin:0 0">$Number</span>
</div>
<div class="a" style="left:507px;top:185px;width:69px;height:20px;overflow:hidden">
<svg class="a" style="left:3px;top:4px" width="13" height="13" viewBox="0 0 13 13"><circle cx="6.5" cy="6.5" r="4.4" fill="#b8f0ee" stroke="#1c2626" stroke-width="1.1"/><path d="M6.5 0V13M0 6.500H13" stroke="#000" stroke-width="1" fill="none"/></svg>
<span class="t" style="left:20.3px;top:3px;font-size:12px;line-height:16px;transform:scaleX(1.0054);transform-origin:0 0">$Account</span>
</div>
<div class="a" style="left:577px;top:185px;width:69px;height:20px;overflow:hidden">
<svg class="a" style="left:3px;top:4px" width="13" height="13" viewBox="0 0 13 13"><circle cx="6.5" cy="6.5" r="4.4" fill="#b8f0ee" stroke="#1c2626" stroke-width="1.1"/><path d="M6.5 0V13M0 6.500H13" stroke="#000" stroke-width="1" fill="none"/></svg>
<span class="t" style="left:20.3px;top:3px;font-size:12px;line-height:16px;transform:scaleX(0.9525);transform-origin:0 0">$Date</span>
</div>
<div class="a" style="left:647px;top:185px;width:69px;height:20px;overflow:hidden">
<svg class="a" style="left:3px;top:4px" width="13" height="13" viewBox="0 0 13 13"><circle cx="6.5" cy="6.5" r="4.4" fill="#b8f0ee" stroke="#1c2626" stroke-width="1.1"/><path d="M6.5 0V13M0 6.500H13" stroke="#000" stroke-width="1" fill="none"/></svg>
<span class="t" style="left:20.3px;top:3px;font-size:12px;line-height:16px;transform:scaleX(0.9880);transform-origin:0 0">$Time</span>
</div>
<div class="a" style="left:717px;top:185px;width:30px;height:20px;overflow:hidden">
<svg class="a" style="left:3px;top:4px" width="13" height="13" viewBox="0 0 13 13"><circle cx="6.5" cy="6.5" r="4.4" fill="#b8f0ee" stroke="#1c2626" stroke-width="1.1"/><path d="M6.5 0V13M0 6.500H13" stroke="#000" stroke-width="1" fill="none"/></svg>
<span class="t" style="left:20.3px;top:3px;font-size:12px;line-height:16px;transform:scaleX(1.0203);transform-origin:0 0">$Percent</span>
</div>
<div class="a" style="left:747px;top:163px;width:17px;height:323px;background:#f0f0f0;"></div>
<div class="a" style="left:748px;top:180px;width:15px;height:30px;background:#cdcdcd;"></div>
<svg class="a" style="left:751px;top:169px;" width="9" height="6" viewBox="0 0 9 6"><path d="M1 5L4.5 1.5L8 5" stroke="#484848" stroke-width="1.9" fill="none"/></svg>
<svg class="a" style="left:751px;top:475px;" width="9" height="6" viewBox="0 0 9 6"><path d="M1 1L4.5 4.5L8 1" stroke="#484848" stroke-width="1.9" fill="none"/></svg>
<div class="a" style="left:747px;top:163px;width:1px;height:323px;background:#fff;"></div>
<div class="a" style="left:341px;top:486px;width:406px;height:17px;background:#f0f0f0;"></div>
<div class="a" style="left:358px;top:487px;width:68px;height:15px;background:#cdcdcd;"></div>
<svg class="a" style="left:346px;top:490px;" width="6" height="9" viewBox="0 0 6 9"><path d="M5 1L1.5 4.5L5 8" stroke="#484848" stroke-width="1.9" fill="none"/></svg>
<svg class="a" style="left:736px;top:490px;" width="6" height="9" viewBox="0 0 6 9"><path d="M1 1L4.5 4.5L1 8" stroke="#484848" stroke-width="1.9" fill="none"/></svg>
<div class="a" style="left:747px;top:486px;width:17px;height:17px;background:#f0f0f0;"></div>
<div class="a" style="left:341px;top:503px;width:423px;height:20px;background:#f0f0f0;"></div>
<div class="a" style="left:381px;top:503px;width:383px;height:2px;background:#fff;"></div>
<div class="a" style="left:381px;top:505px;width:385px;height:1px;background:#a0a0a0;"></div>
<div class="a" style="left:380px;top:505px;width:1px;height:19px;background:#a0a0a0;"></div>
<div class="a" style="left:341px;top:503px;width:39px;height:21px;background:#fff;"></div>
<span class="t" style="left:341.5px;top:507.00px;font-size:12px;line-height:16px;color:#000;transform:scaleX(0.9335);transform-origin:0 0;">Sheet0</span>
<svg class="a" style="left:16px;top:551px;" width="22" height="22" viewBox="0 0 22 22"><circle cx="11" cy="11" r="9.7" fill="#f3f3f5" stroke="#52628a" stroke-width="1.2"/><text x="11.2" y="17.9" text-anchor="middle" font-family="Liberation Sans, sans-serif" font-size="18.5" font-weight="bold" fill="#3b4a72">?</text></svg>
<div class="a" style="left:580px;top:552px;width:90px;height:23px;background:#e1e1e1;border:2px solid #0078d7;box-sizing:border-box;"></div>
<div class="a" style="left:678px;top:552px;width:90px;height:23px;background:#e1e1e1;border:1px solid #adadad;box-sizing:border-box;"></div>
<span class="t" style="left:617.2px;top:556.00px;font-size:12px;line-height:16px;color:#000;transform:scaleX(0.9517);transform-origin:0 0;">OK</span>
<span class="t" style="left:705.2px;top:556.00px;font-size:12px;line-height:16px;color:#000;transform:scaleX(0.9638);transform-origin:0 0;">Cancel</span>
</body></html>
